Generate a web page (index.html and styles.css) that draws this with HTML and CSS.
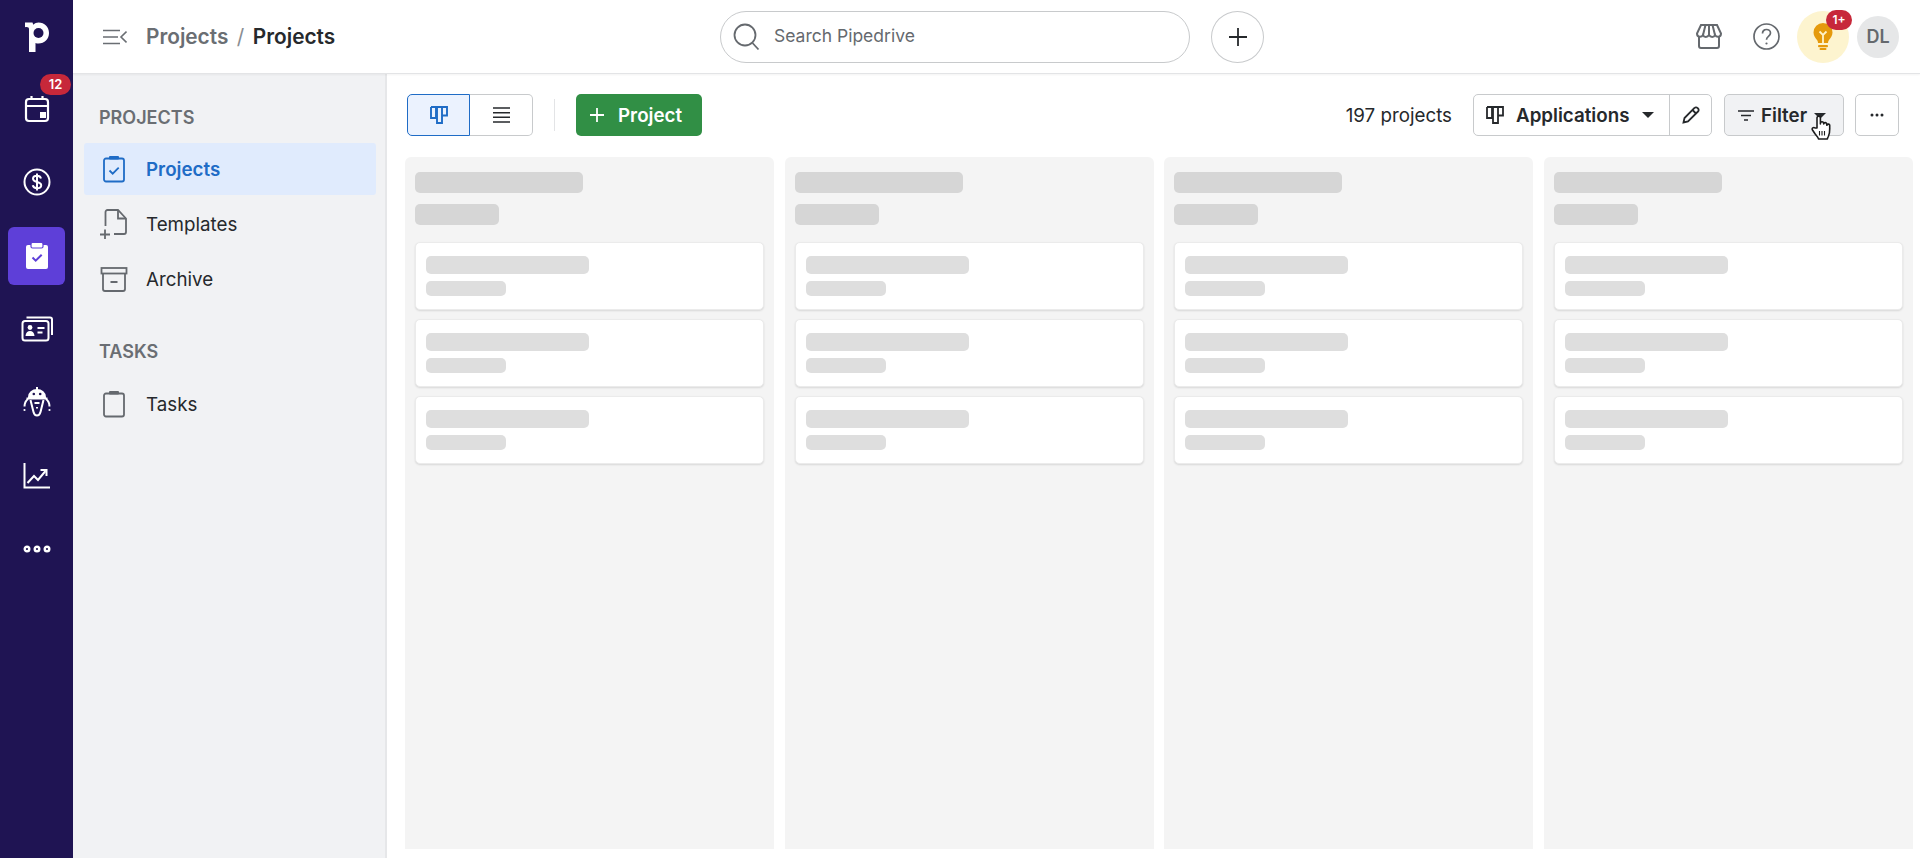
FILE: index.html
```html
<!DOCTYPE html>
<html lang="en">
<head>
  <meta charset="UTF-8" />
  <title>Projects</title>
  <link rel="stylesheet" href="styles.css">
</head>
<body>
  <!-- left rail -->
  <nav class="rail">
    <div class="rail-item logo">
      <svg width="27" height="32" viewBox="0 0 27 32"><path d="M2 1.500h7.500l.8 2.200c1.500-1.500 3.200-2.200 5.200-2.200C21.500 1.500 26 6 26 12s-4.500 10.500-10.500 10.500c-1.200 0-2.200-.2-3-.6V31H6V8.500C6 6.500 5 5.800 2 6.200z" fill="#fff"/><circle cx="15.500" cy="12" r="5" fill="#1f1453"/></svg>
    </div>
    <div class="rail-item">
      <span class="badge rail-badge">12</span>
      <svg width="26" height="28" viewBox="0 0 26 28" fill="none" stroke="#fff" stroke-width="2.200"><rect x="2" y="4" width="22" height="22" rx="3"/><path d="M2 11h22M7.500 1v4M18.500 1v4"/><rect x="16" y="17" width="6" height="6" fill="#fff" stroke="none"/></svg>
    </div>
    <div class="rail-item">
      <svg width="28" height="28" viewBox="0 0 28 28" fill="none" stroke="#fff" stroke-width="2"><circle cx="14" cy="14" r="12.500"/><path d="M18 10.500c-.5-1.800-2-2.700-4-2.700-2.400 0-4 1.200-4 3 0 4.200 8.200 2.200 8.200 6.400 0 1.800-1.800 3-4.200 3-2.200 0-3.800-1-4.300-2.900M14 5.500v17"/></svg>
    </div>
    <div class="rail-item active">
      <svg width="24" height="28" viewBox="0 0 24 28"><path d="M3 3h18a2 2 0 0 1 2 2v20a2 2 0 0 1-2 2H3a2 2 0 0 1-2-2V5a2 2 0 0 1 2-2z" fill="#fff"/><rect x="6" y="0.500" width="12" height="5.500" rx="1.500" fill="#fff" stroke="#5e3fd8" stroke-width="1.200"/><path d="M7.500 15.500l3.200 3.200 6-6" fill="none" stroke="#5e3fd8" stroke-width="2"/></svg>
    </div>
    <div class="rail-item">
      <svg width="32" height="26" viewBox="0 0 32 26" fill="none" stroke="#fff" stroke-width="2"><rect x="1.500" y="5" width="26" height="19.500" rx="2.500"/><path d="M5.500 1.500h23.500a2 2 0 0 1 2 2V19"/><circle cx="9" cy="11.500" r="2.400" fill="#fff" stroke="none"/><path d="M4.500 20c.3-3.500 2-5 4.500-5s4.200 1.500 4.500 5z" fill="#fff" stroke="none"/><path d="M16.500 12h7M16.500 16.500h5"/></svg>
    </div>
    <div class="rail-item">
      <svg width="28" height="30" viewBox="0 0 28 30" fill="none" stroke="#fff" stroke-width="2"><path d="M14 0v3"/><path d="M6 10c0-4 3.500-7 8-7s8 3 8 7z" fill="#fff"/><path d="M3.500 11.500h21"/><path d="M7.500 13l3 12c.5 2 1.800 3.500 3.500 3.500s3-1.500 3.500-3.500l3-12"/><path d="M11.500 16h5M14 20v1.500"/><path d="M5 12C2.500 14 1.500 16.500 1.500 19.500M23 12c2.500 2 3.500 4.500 3.500 7.500"/><circle cx="1.500" cy="23" r="1.100" fill="#fff" stroke="none"/><circle cx="26.500" cy="23" r="1.100" fill="#fff" stroke="none"/><circle cx="10.800" cy="7" r="1.300" fill="#1f1453" stroke="none"/><circle cx="17.200" cy="7" r="1.300" fill="#1f1453" stroke="none"/></svg>
    </div>
    <div class="rail-item">
      <svg width="28" height="26" viewBox="0 0 28 26" fill="none" stroke="#fff" stroke-width="2"><path d="M1.500 0v24.500H27"/><path d="M4.500 20l6.500-7 4 4L22.500 8"/><path d="M17.500 7h6v6" /></svg>
    </div>
    <div class="rail-item">
      <svg width="28" height="8" viewBox="0 0 28 8" fill="none" stroke="#fff" stroke-width="2.400"><circle cx="4" cy="4" r="2.300"/><circle cx="14" cy="4" r="2.300"/><circle cx="24" cy="4" r="2.300"/></svg>
    </div>
  </nav>

  <div class="page">
    <!-- top bar -->
    <header class="topbar">
      <svg class="menu-toggle" width="24" height="16" viewBox="0 0 24 16" fill="none" stroke="#6a6e73" stroke-width="1.600"><path d="M0 1.500h17M0 8h15M0 14.500h17M23.500 2.500L18 8l5.500 5.500"/></svg>
      <div class="crumbs"><span class="crumb-parent">Projects</span><span class="crumb-sep">/</span><span>Projects</span></div>
      <div class="search">
        <svg width="30" height="30" viewBox="0 0 30 30" fill="none" stroke="#65696e" stroke-width="1.800"><circle cx="13" cy="13" r="10.500"/><path d="M20.500 21l6 6.500"/></svg>
        <span>Search Pipedrive</span>
      </div>
      <div class="add-btn">
        <svg width="18" height="18" viewBox="0 0 18 18" stroke="#26292c" stroke-width="1.800"><path d="M9 0v18M0 9h18"/></svg>
      </div>
      <div class="top-right">
        <svg class="store" width="26" height="25" viewBox="0 0 26 25" fill="none" stroke="#65696e" stroke-width="2"><path d="M5 1h16l4 8.500c0 4-4.500 4-6 1.500-1 2.500-4.500 2.500-6 0-1.500 2.500-5 2.500-6 0-1.500 2.500-6 2.500-6-1.500z"/><path d="M9.500 1L7 11M13 1v10M16.500 1L19 11"/><path d="M3 12v10a2 2 0 0 0 2 2h16a2 2 0 0 0 2-2V12"/></svg>
        <svg class="help" width="27" height="27" viewBox="0 0 27 27" fill="none" stroke="#65696e" stroke-width="1.700"><circle cx="13.500" cy="13.500" r="12.500"/><path d="M9.500 10.500c0-2.500 1.800-4 4-4s4 1.500 4 3.600c0 3.400-4 3.300-4 6.600"/><circle cx="13.500" cy="20.500" r="1.100" fill="#65696e" stroke="none"/></svg>
        <div class="bulb">
          <span class="badge bulb-badge">1+</span>
          <svg width="20" height="27" viewBox="0 0 20 27"><path d="M10 0a9.500 9.500 0 0 1 9.500 9.500c0 3.500-2 5.500-3.500 7.500-.8 1-1 2-1 3H5c0-1-.2-2-1-3C2.500 15 .5 13 .5 9.500A9.500 9.500 0 0 1 10 0z" fill="#e59a0c"/><path d="M6.500 8.500L10 12l3.500-3.500M10 12v8" fill="none" stroke="#fff3c9" stroke-width="1.800"/><rect x="5" y="22" width="10" height="2.200" rx="1" fill="#e59a0c"/><rect x="6.500" y="25" width="7" height="2" rx="1" fill="#e59a0c"/></svg>
        </div>
        <div class="avatar">DL</div>
      </div>
    </header>

    <div class="body-row">
      <!-- sidebar -->
      <aside class="sidebar">
        <h2 class="side-title">PROJECTS</h2>
        <a class="side-item selected">
          <svg width="24" height="28" viewBox="0 0 24 28" fill="none" stroke="#1f6cc6" stroke-width="1.800"><rect x="2" y="3.500" width="20" height="23" rx="2"/><rect x="7" y="1" width="10" height="3.500" rx="1" fill="#1f6cc6" stroke="none"/><path d="M7.500 15.500l3.200 3.200 6-6"/></svg>
          <span>Projects</span>
        </a>
        <a class="side-item">
          <svg width="28" height="30" viewBox="0 0 28 30" fill="none" stroke="#65696e" stroke-width="1.800"><path d="M5.500 17V3a2 2 0 0 1 2-2H18l8 8.500V23a2 2 0 0 1-2 2H14"/><path d="M18 1v8.500h8"/><path d="M0 25.500h10M5 20.500v9.500"/></svg>
          <span>Templates</span>
        </a>
        <a class="side-item">
          <svg width="27" height="25" viewBox="0 0 27 25" fill="none" stroke="#65696e" stroke-width="1.800"><rect x="1" y="1" width="25" height="5.500"/><path d="M2.500 6.500V22a2 2 0 0 0 2 2h18a2 2 0 0 0 2-2V6.500M10 15h7"/></svg>
          <span>Archive</span>
        </a>
        <h2 class="side-title tasks-title">TASKS</h2>
        <a class="side-item">
          <svg width="24" height="28" viewBox="0 0 24 28" fill="none" stroke="#65696e" stroke-width="1.800"><rect x="2" y="3.500" width="20" height="23" rx="2"/><rect x="7" y="1" width="10" height="3.500" rx="1" fill="#65696e" stroke="none"/></svg>
          <span>Tasks</span>
        </a>
      </aside>

      <main class="main">
        <div class="toolbar">
          <div class="view-switch">
            <div class="view-btn on">
              <svg width="18" height="18" viewBox="0 0 18 18" fill="none" stroke="#1f6cc6" stroke-width="1.900"><path d="M1 1h16v8.500h-5V1M6 1v11H1V1M6 1h6v16H7V1"/></svg>
            </div>
            <div class="view-btn">
              <svg width="17" height="16" viewBox="0 0 17 16" stroke="#26292c" stroke-width="1.600"><path d="M0 1h17M0 5.700h17M0 10.300h17M0 15h17"/></svg>
            </div>
          </div>
          <div class="tool-sep"></div>
          <div class="add-project">
            <svg width="14" height="14" viewBox="0 0 14 14" stroke="#fff" stroke-width="1.800"><path d="M7 0v14M0 7h14"/></svg>
            <span>Project</span>
          </div>
          <div class="count">197 projects</div>
          <div class="pipeline">
            <div class="pipeline-name">
              <svg width="18" height="18" viewBox="0 0 18 18" fill="none" stroke="#26292c" stroke-width="1.800"><path d="M1 1h16v8.500h-5V1M6 1v11H1V1M6 1h6v16H7V1"/></svg>
              <span>Applications</span>
              <i class="caret"></i>
            </div>
            <div class="pipeline-edit">
              <svg width="18" height="18" viewBox="0 0 18 18" fill="none" stroke="#26292c" stroke-width="1.800"><path d="M1.500 16.500l1-4.500L12.500 2a2 2 0 0 1 3 0l.5.500a2 2 0 0 1 0 3L6 15.500z"/><path d="M10.500 4l3.500 3.500"/></svg>
            </div>
          </div>
          <div class="filter">
            <svg width="16" height="11" viewBox="0 0 16 11" stroke="#26292c" stroke-width="1.500"><path d="M0 1h16M3 5.500h10M6 10h4"/></svg>
            <span>Filter</span>
            <i class="caret"></i>
            <svg class="hand" width="20" height="25" viewBox="0 0 20 25"><path d="M6 13V3a1.700 1.700 0 0 1 3.400 0v6l.1-1.200a1.600 1.600 0 0 1 3.100.2l.1 1a1.500 1.500 0 0 1 3 .3l.2 1a1.400 1.400 0 0 1 2.800.5c0 5 .4 7.500-1.300 10.500-.6 1-1 1.700-1 2.700H7.500c-.3-2-2-3.200-3.500-5.200L1.500 15c-1-1.700 1-3.200 2.500-2z" fill="#fff" stroke="#1d1d1d" stroke-width="1.600" stroke-linejoin="round"/><path d="M8.500 16v4.500M11 16v4.500M13.500 16v4.500" stroke="#1d1d1d" stroke-width="1.100"/></svg>
          </div>
          <div class="more">
            <svg width="14" height="4" viewBox="0 0 14 4" fill="#26292c"><circle cx="2" cy="2" r="1.500"/><circle cx="7" cy="2" r="1.500"/><circle cx="12" cy="2" r="1.500"/></svg>
          </div>
        </div>

        <div class="board">
          <section class="col">
            <div class="bone col-a"></div><div class="bone col-b"></div>
            <div class="card"><div class="bone card-a"></div><div class="bone card-b"></div></div>
            <div class="card"><div class="bone card-a"></div><div class="bone card-b"></div></div>
            <div class="card"><div class="bone card-a"></div><div class="bone card-b"></div></div>
          </section>
          <section class="col">
            <div class="bone col-a"></div><div class="bone col-b"></div>
            <div class="card"><div class="bone card-a"></div><div class="bone card-b"></div></div>
            <div class="card"><div class="bone card-a"></div><div class="bone card-b"></div></div>
            <div class="card"><div class="bone card-a"></div><div class="bone card-b"></div></div>
          </section>
          <section class="col">
            <div class="bone col-a"></div><div class="bone col-b"></div>
            <div class="card"><div class="bone card-a"></div><div class="bone card-b"></div></div>
            <div class="card"><div class="bone card-a"></div><div class="bone card-b"></div></div>
            <div class="card"><div class="bone card-a"></div><div class="bone card-b"></div></div>
          </section>
          <section class="col">
            <div class="bone col-a"></div><div class="bone col-b"></div>
            <div class="card"><div class="bone card-a"></div><div class="bone card-b"></div></div>
            <div class="card"><div class="bone card-a"></div><div class="bone card-b"></div></div>
            <div class="card"><div class="bone card-a"></div><div class="bone card-b"></div></div>
          </section>
        </div>
      </main>
    </div>
  </div>
</body>
</html>
```

FILE: styles.css
```css
*{box-sizing:border-box;margin:0;padding:0}
html,body{height:100%;overflow:hidden}
body{font-family:Inter,"Liberation Sans",sans-serif;color:#26292c;background:#fff;display:flex;font-size:18.750px}
svg{display:block;flex:none}

/* left rail */
.rail{width:73px;flex:none;background:#1f1453;display:flex;flex-direction:column}
.rail-item{height:73.300px;flex:none;display:flex;align-items:center;justify-content:center;position:relative}
.rail-item.logo{height:72.500px;padding-top:2px}
.rail-item.active::before{content:"";position:absolute;left:8px;right:8px;top:8px;bottom:7px;background:#5e3fd8;border-radius:6px}
.rail-item.active svg{position:relative}
.badge{position:absolute;background:#c7283a;color:#fff;font-weight:600;font-size:13px;line-height:21px;height:21px;border-radius:11px;text-align:center}
.rail-badge{left:40px;top:1px;width:31px}

/* top bar */
.page{flex:1;min-width:0;display:flex;flex-direction:column}
.topbar{height:74px;flex:none;display:flex;align-items:center;border-bottom:1px solid #e3e4e6;padding-left:30px;position:relative;box-shadow:0 1px 2px rgba(0,0,0,.05)}
.crumbs{margin-left:19px;font-size:20.800px;font-weight:600;width:574px;display:flex}
.crumb-parent{color:#6a6e73}
.crumb-sep{color:#8a8e93;font-weight:400;margin:0 8.500px}
.search{width:470px;height:52px;border:1px solid #c8cacc;border-radius:26px;display:flex;align-items:center;padding-left:11px;gap:12px;color:#65696e;font-size:17.500px}
.search span{padding-bottom:2px}
.add-btn{width:53px;height:52px;margin-left:21px;border:1px solid #c8cacc;border-radius:50%;display:flex;align-items:center;justify-content:center}
.top-right{margin-left:auto;padding-right:21px;display:flex;align-items:center}
.help{margin-left:31px}
.bulb{width:52px;height:52px;margin-left:17px;border-radius:50%;background:#fdf4cf;display:flex;align-items:center;justify-content:center;position:relative}
.bulb-badge{left:29px;top:-1px;width:26px;height:20px;line-height:20px;font-size:12px}
.avatar{width:42px;height:42px;margin-left:8px;border-radius:50%;background:#e6e7e8;color:#65696e;font-weight:600;font-size:18px;display:flex;align-items:center;justify-content:center}

/* sidebar */
.body-row{flex:1;display:flex;min-height:0}
.sidebar{width:314px;flex:none;background:#f1f2f4;border-right:2px solid #e6e7e9;padding:33px 9px 0 11px}
.side-title{font-size:18px;line-height:22px;font-weight:600;color:#6a6e73;padding-left:15px;margin-bottom:14px}
.tasks-title{margin-top:36px;margin-bottom:15px}
.side-item{height:52px;margin-bottom:3px;display:flex;align-items:center;padding-left:16px;border-radius:3px;position:relative}
.side-item svg{width:28px;margin-right:18px}
.side-item.selected{background:#e0ebfd;color:#1f6cc6;font-weight:600}

/* toolbar + board */
.main{flex:1;min-width:0;display:flex;flex-direction:column}
.toolbar{height:83px;flex:none;display:flex;align-items:center;padding:0 21px 1px 20px}
.view-switch{display:flex;height:42px}
.view-btn{width:63px;display:flex;align-items:center;justify-content:center;border:1px solid #c8cacc;border-left:0;border-radius:0 5px 5px 0}
.view-btn.on{background:#ebf2fe;border:1px solid #1f6cc6;border-radius:5px 0 0 5px}
.tool-sep{width:1px;height:32px;background:#e3e4e6;margin:0 21px}
.add-project{width:126px;height:42px;background:#318f45;color:#fff;border-radius:5px;font-weight:600;display:flex;align-items:center;padding-left:14px;gap:14px}
.count{margin-left:auto;margin-right:21px}
.pipeline{display:flex;height:42px;border:1px solid #c8cacc;border-radius:5px;font-weight:600}
.pipeline-name{width:196px;flex:none;display:flex;align-items:center;padding-left:12px;border-right:1px solid #c8cacc}
.pipeline-name span{margin-left:12px}
.pipeline-name .caret{margin-left:13px}
.pipeline-edit{width:41px;display:flex;align-items:center;justify-content:center}
.caret{display:block;width:0;height:0;border:6px solid transparent;border-top:6.500px solid #26292c;border-bottom:0}
.filter{width:120px;height:42px;margin-left:12px;background:#f1f2f4;border:1px solid #c8cacc;border-radius:5px;font-weight:600;display:flex;align-items:center;padding-left:13px;position:relative}
.filter span{margin-left:7px}
.filter .caret{margin-left:7px;margin-top:2px}
.hand{position:absolute;left:86px;top:20px}
.more{width:44px;height:42px;margin-left:11px;border:1px solid #c8cacc;border-radius:5px;display:flex;align-items:center;justify-content:center}

.board{flex:1;display:grid;grid-template-columns:repeat(4,369px);column-gap:10.700px;padding:0 0 9px 18px;min-height:0}
.col{background:#f4f4f4;border-radius:6px 6px 0 0;padding:15px 10px 0}
.bone{background:#dedede;border-radius:5px}
.col-a{width:168px;height:21px;background:#d6d6d6}
.col-b{width:84px;height:21px;margin-top:11px;background:#d6d6d6}
.card{height:67.500px;background:#fff;border:1px solid #ebebeb;border-radius:5px;margin-bottom:9.500px;padding:13px 10px 0;box-shadow:0 1px 2px rgba(0,0,0,.12)}
.col-b + .card{margin-top:17px}
.card-a{width:163px;height:18px}
.card-b{width:80px;height:15px;margin-top:7px}
```
